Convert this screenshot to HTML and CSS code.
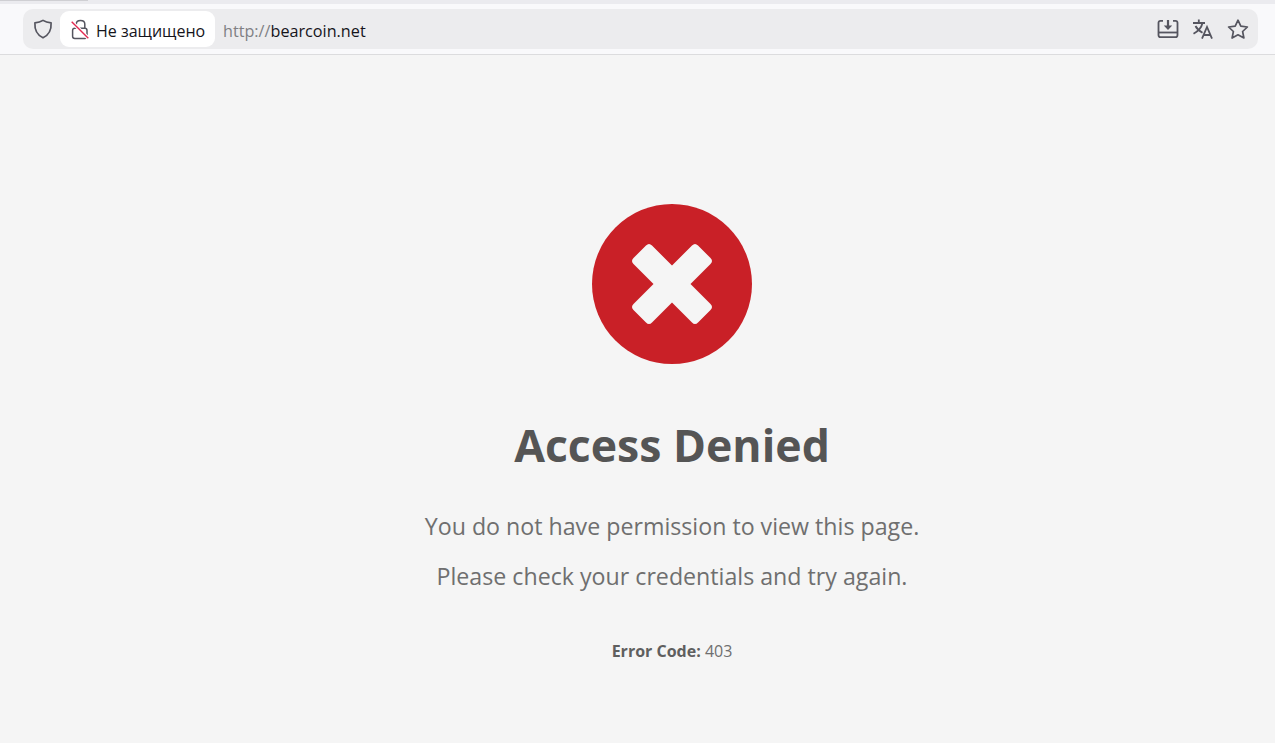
FILE: index.html
```html
<!DOCTYPE html>
<html>
<head>
    <title>Access Denied</title>
    <link rel="stylesheet" href="styles.css">
</head>
<body>
    <div class="tabstrip"><div class="tab"></div></div>
    <div class="toolbar">
        <div class="urlbar">
            <svg class="icon shield" width="20" height="20" viewBox="0 0 20 20">
                <path d="M10 1.4 C7.8 2.9 5 3.7 1.9 3.9 C1.5 10.5 3.8 15.9 10 18.8 C16.2 15.9 18.5 10.5 18.1 3.9 C15 3.7 12.2 2.9 10 1.4 Z" fill="none" stroke="#55555f" stroke-width="1.7" stroke-linejoin="round"/>
            </svg>
            <div class="security">
                <svg class="icon" width="20" height="22" viewBox="0 0 20 22">
                    <path d="M6.3 10.5 V6 C6.3 3.6 8 2.4 10.5 2.4 C13 2.4 14.8 3.6 14.8 6 V10.5" fill="none" stroke="#55555f" stroke-width="1.5"/>
                    <rect x="2.6" y="10.2" width="14.4" height="10.2" rx="2.2" fill="none" stroke="#55555f" stroke-width="1.5"/>
                    <path d="M1.7 3.7 L18.3 20.3" stroke="#fff" stroke-width="3.6"/>
                    <path d="M1.7 3.7 L18.3 20.3" stroke="#e22850" stroke-width="1.4"/>
                </svg>
                <span>Не защищено</span>
            </div>
            <div class="address"><span class="scheme">http://</span>bearcoin.net</div>
            <div class="actions">
                <svg class="icon" width="22" height="20" viewBox="0 0 22 20">
                    <path d="M6 1.8 H3.5 C2.2 1.8 1.5 2.6 1.5 3.8 V16 C1.5 17.4 2.2 18.2 3.5 18.2 H18.5 C19.8 18.2 20.5 17.4 20.5 16 V3.8 C20.5 2.6 19.8 1.8 18.5 1.8 H16" fill="none" stroke="#55555f" stroke-width="1.8"/>
                    <path d="M1.5 13.5 H20.5" stroke="#55555f" stroke-width="1.8"/>
                    <path d="M11 1 V7" stroke="#55555f" stroke-width="2.2"/>
                    <path d="M6.8 6.5 H15.2 L11 11 Z" fill="#55555f"/>
                </svg>
                <svg class="icon" width="22" height="20" viewBox="0 0 22 20">
                    <path d="M1 4 H13 M6.8 0.5 V4 M10.5 4 C9.5 8.5 6.5 12 1.5 14.8 M3.5 7 C5 10 7.5 12 10.5 13.8" fill="none" stroke="#55555f" stroke-width="1.8"/>
                    <path d="M10 19.6 L15 8 L20 19.6 M11.6 16 H18.4" fill="none" stroke="#55555f" stroke-width="1.8"/>
                </svg>
                <svg class="icon" width="22" height="20" viewBox="0 0 22 20">
                    <path d="M11 1.2 L13.8 7.2 L20.4 8 L15.6 12.5 L16.9 19 L11 15.8 L5.1 19 L6.4 12.5 L1.6 8 L8.2 7.2 Z" fill="none" stroke="#55555f" stroke-width="1.7" stroke-linejoin="round"/>
                </svg>
            </div>
        </div>
    </div>
    <div class="page">
        <svg class="denied" width="160" height="160" viewBox="0 0 160 160">
            <circle cx="80" cy="80" r="80" fill="#c92027"/>
            <path d="M80 61.5 L100 41.5 Q103 38.5 106 41.5 L118.5 54 Q121.5 57 118.5 60 L98.5 80 L118.5 100 Q121.5 103 118.5 106 L106 118.5 Q103 121.5 100 118.5 L80 98.5 L60 118.5 Q57 121.5 54 118.5 L41.5 106 Q38.5 103 41.5 100 L61.5 80 L41.5 60 Q38.5 57 41.5 54 L54 41.5 Q57 38.5 60 41.5 Z" fill="#f5f5f5"/>
        </svg>
        <h1>Access Denied</h1>
        <p class="message">You do not have permission to view this page.</p>
        <p class="message">Please check your credentials and try again.</p>
        <p class="code"><strong>Error Code:</strong> 403</p>
    </div>
</body>
</html>
```

FILE: styles.css
```css
html, body {
    height: 100%;
}
body {
    margin: 0;
    font-family: "Open Sans", "Noto Sans", sans-serif;
    background-color: #f5f5f5;
    overflow: hidden;
}
.tabstrip {
    height: 4px;
    background-color: #ebebef;
}
.tab {
    width: 88px;
    height: 1px;
    background-color: #cfcfd3;
}
.toolbar {
    height: 51px;
    box-sizing: border-box;
    padding: 5px 17px 0 23px;
    background-color: #f9f9fb;
    border-bottom: 1px solid #dcdcde;
}
.urlbar {
    height: 40px;
    display: flex;
    align-items: center;
    background-color: #ececee;
    border-radius: 10px;
    padding-left: 10px;
}
.icon {
    display: block;
    flex: none;
}
.shield {
    margin-right: 7px;
}
.security {
    height: 36px;
    width: 155px;
    box-sizing: border-box;
    display: flex;
    align-items: center;
    gap: 6px;
    padding-left: 10px;
    background-color: #fff;
    border-radius: 9px;
    font-size: 16px;
    color: #15141a;
    white-space: nowrap;
}
.security span,
.address {
    padding-top: 4px;
}
.address {
    margin-left: 8px;
    font-size: 16.2px;
    color: #15141a;
}
.scheme {
    color: #808084;
}
.actions {
    margin-left: auto;
    display: flex;
    gap: 13px;
    padding-right: 9px;
}
.page {
    display: flex;
    flex-direction: column;
    align-items: center;
    padding: 149px 0 0 69px;
    color: #555;
}
.denied {
    display: block;
}
h1 {
    margin: 51px 0 0;
    font-size: 44.6px;
    line-height: 60px;
    font-weight: 700;
    color: #555;
}
.message {
    margin: 0;
    font-size: 23.2px;
    line-height: 50px;
    color: #6f6f6f;
}
h1 + .message {
    margin-top: 26px;
}
.code {
    margin: 38px 0 0;
    font-size: 16px;
    line-height: 24px;
    color: #6f6f6f;
}
.code strong {
    color: #5f5f5f;
}
```
